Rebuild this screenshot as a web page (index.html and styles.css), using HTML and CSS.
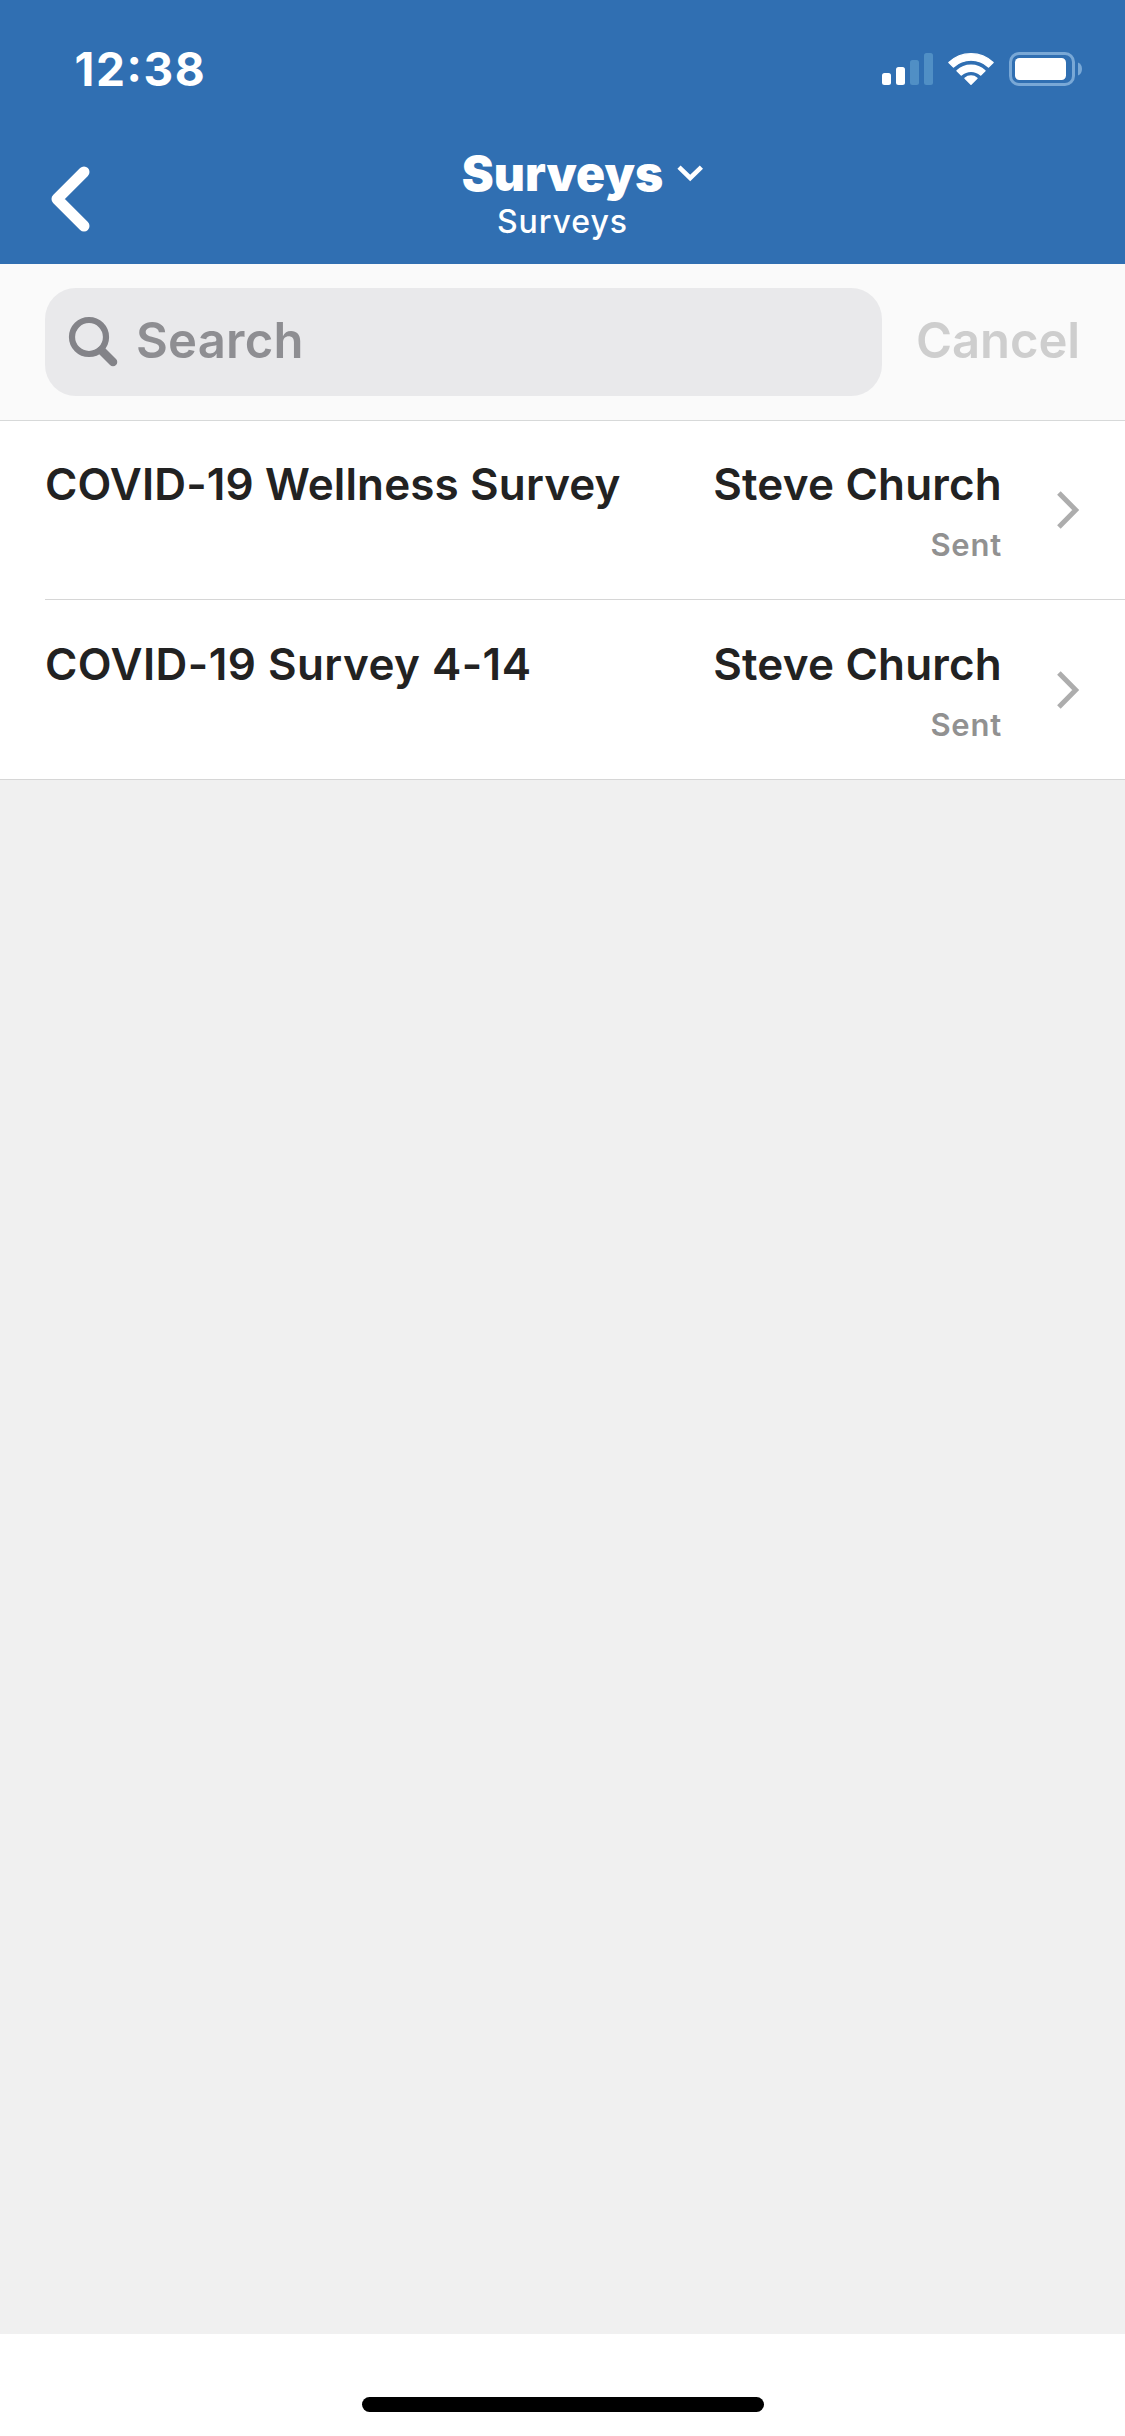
FILE: index.html
```
<!DOCTYPE html>
<html lang="en">
<head>
<meta charset="utf-8">
<title>Surveys</title>
<link rel="stylesheet" href="styles.css">
</head>
<body>
<div class="screen">
  <header class="header">
    <div class="status">
      <span class="time">12:38</span>
      <div class="status-icons">
        <svg width="51" height="34" viewBox="0 0 51 34" fill="#fff">
          <rect x="0" y="21" width="9" height="12" rx="2.5"/>
          <rect x="14" y="15" width="9" height="18" rx="2.5"/>
          <rect class="dim" x="28" y="8" width="9" height="25" rx="2.5"/>
          <rect class="dim" x="42" y="1" width="9" height="32" rx="2.5"/>
        </svg>
        <svg width="46" height="34" viewBox="0 0 46 34" fill="#fff" stroke="#fff" stroke-width="1.4" stroke-linejoin="round">
          <path d="M.9 10.6A31.8 31.8 0 0 1 45.1 10.6L40.5 14.9A26 26 0 0 0 5.5 14.9Z"/>
          <path d="M9 18.7A20.6 20.6 0 0 1 37 18.7L32.7 23A14.6 14.6 0 0 0 13.3 23Z"/>
          <path d="M17 26.2A9.2 9.2 0 0 1 29 26.2L23 32.3Z"/>
        </svg>
        <svg width="73" height="34" viewBox="0 0 73 34">
          <rect class="shell" x="1.5" y="1.5" width="63" height="31" rx="8.5"/>
          <rect x="6" y="6" width="51" height="22" rx="4.5" fill="#fff"/>
          <path class="cap" d="M69 10.5Q73 12.3 73 17T69 23.5Z"/>
        </svg>
      </div>
    </div>
    <div class="navbar">
      <svg class="back" width="40" height="66" viewBox="0 0 40 66">
        <path d="M33 6L6 33L33 60"/>
      </svg>
      <div class="titles">
        <div class="title">Surveys
          <svg class="caret" width="27" height="17" viewBox="0 0 27 17"><path d="M2 2.2L13.2 13L24.4 2.2"/></svg>
        </div>
        <div class="subtitle">Surveys</div>
      </div>
    </div>
  </header>

  <div class="searchbar">
    <div class="field">
      <svg class="magnifier" width="50" height="50" viewBox="0 0 50 50">
        <path class="handle" d="M32.5 33.5L44 45"/>
        <circle cx="20" cy="20" r="17"/>
      </svg>
      <span class="placeholder">Search</span>
    </div>
    <span class="cancel">Cancel</span>
  </div>

  <main class="list">
    <div class="row">
      <div class="name">COVID-19 Wellness Survey</div>
      <div class="detail">
        <div class="person">Steve Church</div>
        <div class="state">Sent</div>
      </div>
      <svg class="chevron" width="24" height="40" viewBox="0 0 24 40"><path d="M2.9 3L19.7 20L2.9 37"/></svg>
    </div>
    <div class="row row-last">
      <div class="name name-wide">COVID-19 Survey 4-14</div>
      <div class="detail">
        <div class="person">Steve Church</div>
        <div class="state">Sent</div>
      </div>
      <svg class="chevron" width="24" height="40" viewBox="0 0 24 40"><path d="M2.9 3L19.7 20L2.9 37"/></svg>
    </div>
  </main>

  <footer class="footer"><div class="home-indicator"></div></footer>
</div>
</body>
</html>
```
FILE: styles.css
```
* { box-sizing: border-box; }
body { margin: 0; font-family: Inter, "Liberation Sans", sans-serif; font-weight: 600; color: #222; }
svg { display: block; flex: none; overflow: visible; }

.screen { width: 1125px; height: 2436px; display: flex; flex-direction: column; background: #f0f0f0; }

.header { height: 264px; flex: none; background: #306fb2; color: #fff; }
.status { height: 144px; padding: 42px 43px 0 74.5px; display: flex; justify-content: space-between; align-items: flex-start; }
.time { font-size: 46px; line-height: 54px; font-weight: 700; letter-spacing: 1.6px; font-feature-settings: "case"; }
.status-icons { display: flex; gap: 15px; padding-top: 10px; }
.dim { fill: #508fc5; }
.shell { fill: none; stroke: #79a8d6; stroke-width: 3; }
.cap { fill: #79a8d6; }

.navbar { height: 120px; padding: 0 50px; display: grid; grid-template-columns: 1fr auto 1fr; align-items: start; }
.back { margin: 21.5px 0 0 .5px; }
.back path { fill: none; stroke: #fff; stroke-width: 11; stroke-linecap: round; stroke-linejoin: round; }
.titles { padding-top: 1px; text-align: center; }
.title { position: relative; font-size: 48px; line-height: 58px; font-weight: 900; letter-spacing: 0; }
.caret { position: absolute; left: 100%; top: 20px; margin-left: 14px; }
.caret path { fill: none; stroke: #fff; stroke-width: 4.6; }
.subtitle { font-size: 32px; line-height: 38px; font-weight: 500; letter-spacing: .95px; }

.searchbar { height: 157px; flex: none; padding: 0 45px; display: flex; align-items: center; justify-content: space-between; background: #fafafa; border-bottom: 1px solid #d7d9d9; }
.field { width: 837px; height: 108px; padding: 0 24px; display: flex; align-items: center; gap: 17px; border-radius: 31px; background: #e9e9eb; }
.magnifier circle { fill: none; stroke: #838388; stroke-width: 6.2; }
.handle { fill: none; stroke: #838388; stroke-width: 8.5; stroke-linecap: round; }
.placeholder { padding-bottom: 4px; font-size: 49px; letter-spacing: .2px; color: #8e8e92; }
.cancel { padding-bottom: 4px; font-size: 49px; letter-spacing: -.1px; color: #cecece; }

.list { flex: 1; }
.row { height: 179px; padding: 36px 45px 0 0; margin-left: 45px; display: flex; border-bottom: 1px solid #d6d6d6; background: #fff; box-shadow: -45px 0 #fff; }
.row-last { height: 180px; margin-left: 0; padding: 37px 45px 0 45px; box-shadow: none; }
.name { flex: 1; font-size: 44px; line-height: 54px; letter-spacing: .12px; white-space: nowrap; }
.name-wide { letter-spacing: .45px; }
.detail { text-align: right; }
.person { font-size: 44px; line-height: 54px; letter-spacing: .2px; }
.state { margin-top: 15px; font-size: 31px; line-height: 38px; letter-spacing: .8px; color: #919191; }
.chevron { margin: 33px 0 0 54px; }
.chevron path { fill: none; stroke: #adadad; stroke-width: 5; }

.footer { height: 102px; flex: none; padding-top: 63px; background: #fff; }
.home-indicator { width: 402px; height: 15px; margin: 0 auto; border-radius: 7.5px; background: #000; }
```
